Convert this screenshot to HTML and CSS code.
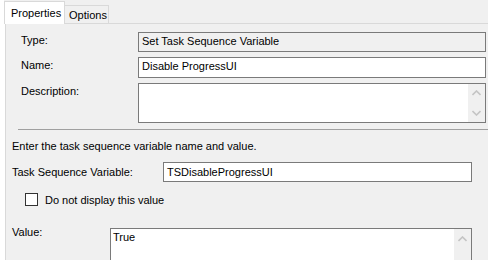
FILE: index.html
```html
<!DOCTYPE html>
<html lang="en">
<head>
    <meta charset="UTF-8">
    <title>Set Task Sequence Variable</title>
    <link rel="stylesheet" href="styles.css">
</head>
<body>
    <div class="window">
        <div class="tabs">
            <div class="tab active">Properties</div>
            <div class="tab">Options</div>
        </div>

        <div class="page">
            <div class="props">
                <div class="lbl">Type:</div>
                <div class="field readonly type">Set Task Sequence Variable</div>

                <div class="lbl">Name:</div>
                <div class="field name">Disable ProgressUI</div>

                <div class="lbl">Description:</div>
                <div class="field area desc">
                    <div class="area-text"></div>
                    <div class="scroll">
                        <svg width="9" height="6" viewBox="0 0 9 6"><polyline points="0.5,5 4.5,1 8.5,5"/></svg>
                        <svg width="9" height="6" viewBox="0 0 9 6"><polyline points="0.5,1 4.5,5 8.5,1"/></svg>
                    </div>
                </div>
            </div>

            <div class="sep"></div>

            <div class="settings">
                <p class="hint">Enter the task sequence variable name and value.</p>

                <div class="var-row">
                    <div class="var-lbl">Task Sequence Variable:</div>
                    <div class="field var">TSDisableProgressUI</div>
                </div>

                <div class="check">
                    <span class="box"></span>
                    <span>Do not display this value</span>
                </div>

                <div class="value-row">
                    <div class="value-lbl">Value:</div>
                    <div class="field area value">
                        <div class="area-text">True</div>
                        <div class="scroll">
                            <svg width="9" height="6" viewBox="0 0 9 6"><polyline points="0.5,5 4.5,1 8.5,5"/></svg>
                        </div>
                    </div>
                </div>
            </div>
        </div>
    </div>
</body>
</html>
```

FILE: styles.css
```css
html, body {
    margin: 0;
    padding: 0;
    background-color: #ffffff;
}
body {
    font-family: "Liberation Sans", Arial, sans-serif;
    font-size: 11px;
    line-height: 13px;
    color: #000000;
    width: 488px;
    height: 260px;
    overflow: hidden;
}
.window {
    padding-left: 4px;
}

/* tab strip */
.tabs {
    display: flex;
    align-items: flex-end;
    height: 23px;
    background-color: #f0f0f0;
}
.tab {
    box-sizing: border-box;
    border: 1px solid #d9d9d9;
    border-bottom: none;
    background-color: #f0f0f0;
}
.tab.active {
    position: relative;
    z-index: 1;
    width: 61px;
    height: 23px;
    margin-bottom: -1px;
    padding: 5px 0 0 6px;
    background-color: #ffffff;
}
.tab:not(.active) {
    width: 45px;
    height: 18px;
    margin-left: -1px;
    padding: 3px 0 0 4px;
}

/* tab page */
.page {
    margin-left: 1px;
    height: 237px;
    border-top: 1px solid #d9d9d9;
    border-left: 1px solid #d9d9d9;
    background-color: #f0f0f0;
    overflow: hidden;
}
.props {
    display: grid;
    grid-template-columns: 117px 348px;
    row-gap: 5px;
    padding: 8px 0 0 15px;
}
.lbl {
    padding-top: 2px;
}
.field {
    box-sizing: border-box;
    border: 1px solid #7a7a7a;
    background-color: #ffffff;
    padding: 2px 0 0 3px;
    white-space: nowrap;
}
.field.readonly {
    background-color: #f0f0f0;
}
.type {
    height: 20px;
}
.name {
    height: 21px;
}
.area {
    display: flex;
    padding: 0;
}
.area-text {
    flex: 1;
    padding: 2px 0 0 2px;
}
.desc {
    height: 40px;
}
.scroll {
    width: 17px;
    background-color: #f0f0f0;
    display: flex;
    flex-direction: column;
    align-items: center;
    justify-content: space-between;
    padding: 6px 0 6px;
}
.scroll svg {
    fill: none;
    stroke: #c4c4c4;
    stroke-width: 1.6;
}

.sep {
    height: 0;
    margin: 6px 0 0 12px;
    border-top: 1px solid #a0a0a0;
}

/* variable settings */
.settings {
    padding-left: 6px;
}
.hint {
    margin: 10px 0 0 0;
    white-space: nowrap;
}
.var-row {
    display: flex;
    margin-top: 9px;
}
.var-lbl {
    width: 151px;
    padding-top: 4px;
}
.field.var {
    width: 309px;
    height: 20px;
    padding-top: 3px;
}
.check {
    display: flex;
    align-items: flex-start;
    gap: 7px;
    margin: 11px 0 0 13px;
}
.check span:last-child {
    padding-top: 1px;
}
.box {
    box-sizing: border-box;
    width: 13px;
    height: 13px;
    border: 1px solid #333333;
    background-color: #ffffff;
}
.value-row {
    display: flex;
    align-items: flex-start;
    margin-top: 21px;
}
.value-lbl {
    width: 98px;
    margin-top: -2px;
}
.field.value {
    width: 362px;
    height: 45px;
}
.value .scroll {
    justify-content: flex-start;
    padding-top: 7px;
}
```
